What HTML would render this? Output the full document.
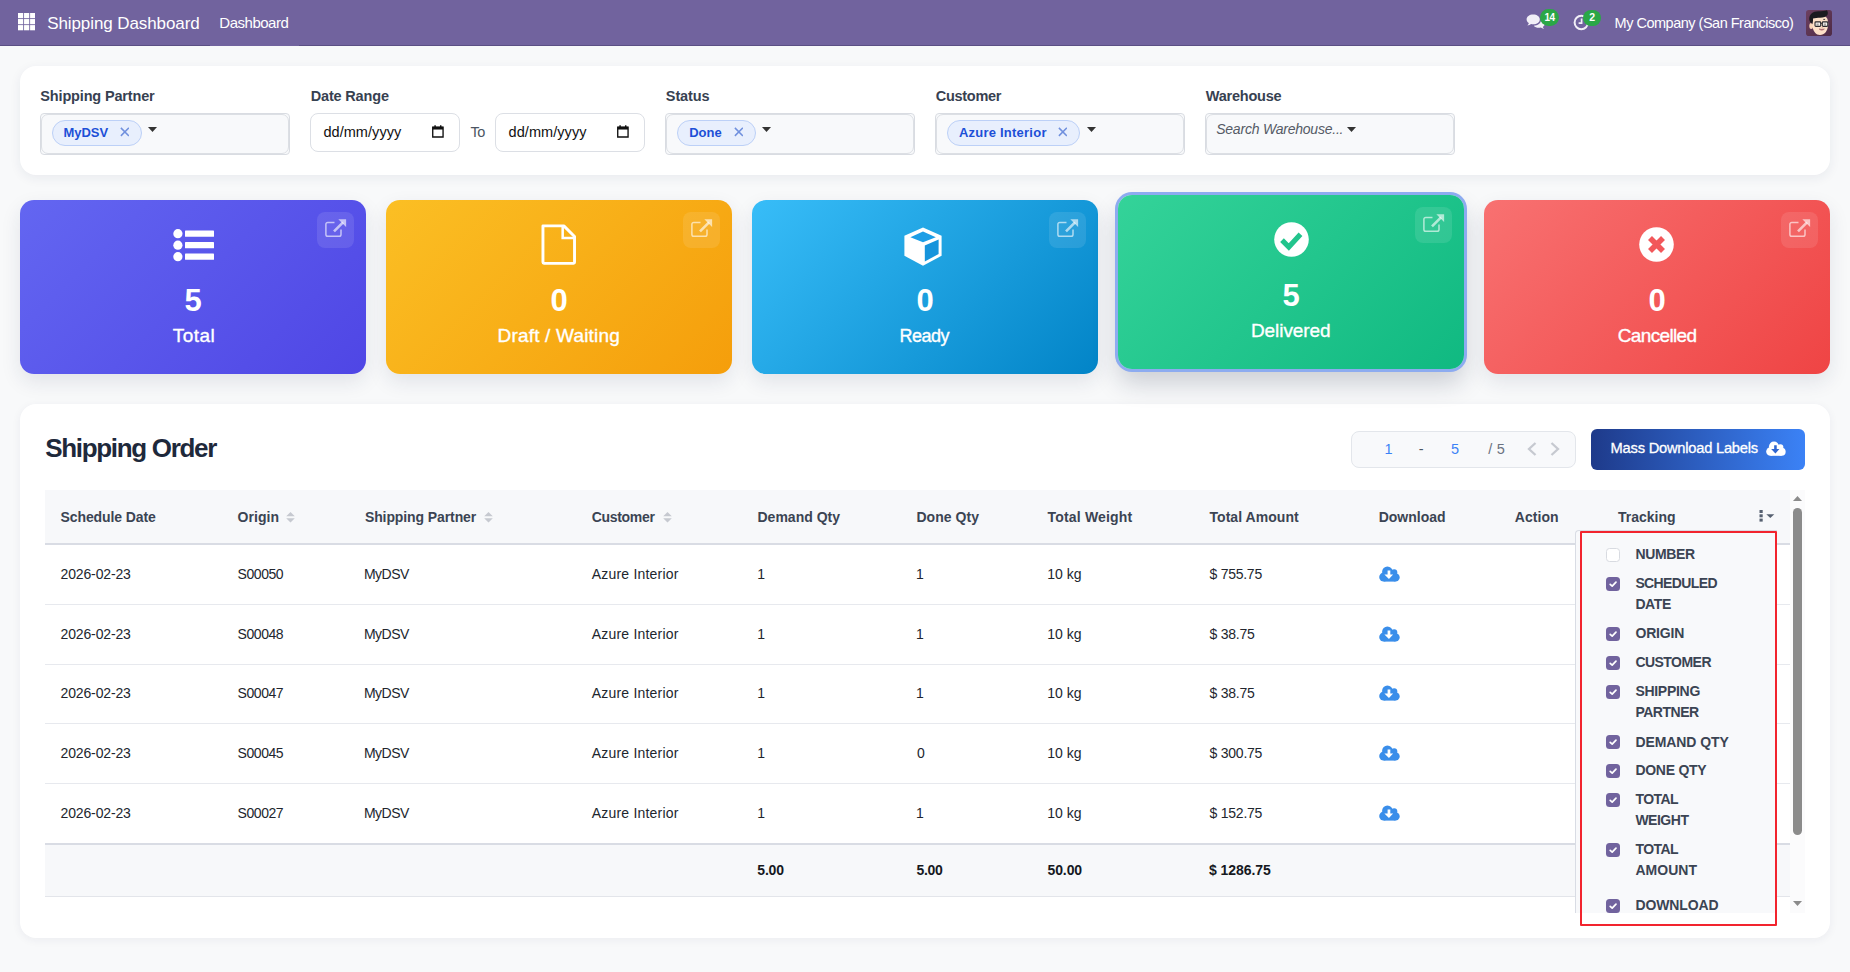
<!DOCTYPE html>
<html>
<head>
<meta charset="utf-8">
<title>Shipping Dashboard</title>
<style>
*{box-sizing:border-box;margin:0;padding:0}
html,body{width:1850px;height:972px;overflow:hidden}
body{background:#f8f9fa;font-family:"Liberation Sans",sans-serif;color:#374151;position:relative;font-size:14px}
.abs{position:absolute}
.t{position:absolute;white-space:nowrap;line-height:1}
svg{display:block}
/* NAVBAR */
#nav{position:absolute;left:0;top:0;width:1850px;height:46px;background:#71639e;border-bottom:1px solid #5b4f84}
#nav .t{color:#fff}
/* FILTER CARD */
#filters{position:absolute;left:20px;top:66px;width:1810px;height:109px;background:#fff;border-radius:16px;box-shadow:0 3px 12px rgba(30,40,80,.07)}
.lbl{position:absolute;white-space:nowrap;line-height:1;font-weight:700;font-size:14px;color:#374151;top:89px}
.sel{position:absolute;top:113px;width:250px;height:42px;border:1px solid #d9dce2;border-radius:4px;background:#f8f9fb}
.sel:before{content:"";position:absolute;left:0;top:0;right:0;bottom:0;border:1px solid #dcdfe4;border-radius:7px}
.tag{position:absolute;top:6px;left:11px;height:26px;border:1px solid #bcd0f7;background:#e8effd;border-radius:14px}
.tag .t{color:#1d4fd7;font-weight:700;font-size:13.5px;top:6px;left:11px}
.date{position:absolute;top:113px;width:150px;height:39px;border:1px solid #dcdfe5;border-radius:8px;background:#fff}
.date .t{left:12px;top:12px;font-size:14px;color:#111}
/* KPI */
.kpi{z-index:1;position:absolute;top:200px;width:346px;height:174px;border-radius:14px;box-shadow:0 8px 20px rgba(30,40,80,.10)}
.kpi .num{position:absolute;left:0;width:100%;text-align:center;top:86px;font-size:30px;font-weight:700;color:#fff;line-height:1}
.kpi .cap{-webkit-text-stroke:.35px #fff;position:absolute;left:0;width:100%;text-align:center;top:126px;font-size:18px;color:#fff;line-height:1}
.kpi .ico{position:absolute;left:50%;top:0}
.kpi .ext{position:absolute;right:12px;top:12px;width:37px;height:36px;border-radius:8px;background:rgba(255,255,255,.10)}

/* TABLE CARD */
#card{position:absolute;left:20px;top:404px;width:1810px;height:534px;background:#fff;border-radius:16px;box-shadow:0 2px 10px rgba(30,40,80,.06)}
#title{left:45px;top:436px;font-size:25px;font-weight:700;color:#1e293b}
#pager{position:absolute;left:1351px;top:431px;width:225px;height:37px;border:1px solid #e3e6eb;border-radius:8px;background:#f8f9fb}
#btn{position:absolute;left:1591px;top:429px;width:214px;height:41px;border-radius:6px;background:linear-gradient(90deg,#1e3a8a,#3b82f6)}
#thead{position:absolute;left:45px;top:490px;width:1745px;height:55px;background:#f7f8fa;border-bottom:2px solid #d9dce4}
.th{position:absolute;white-space:nowrap;line-height:1;font-weight:700;font-size:14.5px;color:#3b4453;top:510px}
.td{position:absolute;white-space:nowrap;line-height:1;font-size:14.5px;color:#22262e}
.rl{position:absolute;left:45px;width:1745px;height:1px;background:#e7e9ee}
#tfoot{position:absolute;left:45px;top:843px;width:1745px;height:54px;background:#f7f8fa;border-top:2px solid #d9dce4;border-bottom:1px solid #e3e5ea}
.tf{position:absolute;white-space:nowrap;line-height:1;font-weight:700;font-size:14px;color:#16191f;top:863px}
/* DROPDOWN */
#dd{position:absolute;left:1575px;top:530px;width:201.500px;height:382.600px;background:#f8f9fb;border-left:1px solid #d9dce4;border-top:1px solid #d9dce4;border-top-left-radius:4px;overflow:hidden}
#red{position:absolute;left:1580px;top:531px;width:197px;height:395px;border:2px solid #f2242e;border-radius:1px}
.ck{position:absolute;left:1606px;width:14px;height:14px;border-radius:3.5px;background:#71639e}
.ck.off{background:#fff;border:1px solid #d8dbe1}
.di{position:absolute;left:1635px;white-space:nowrap;line-height:1;font-weight:700;font-size:14px;color:#3b4453}
/* SCROLLBAR */
#sbt{position:absolute;left:1790px;top:490px;width:15px;height:422.600px;background:#fbfbfc}
#sbh{position:absolute;left:1793px;top:508px;width:9px;height:326.500px;border-radius:4.500px;background:#8b8b8b}
/*FIT*/
#brand{font-size:17px!important;letter-spacing:-0.088px!important;left:47.2px!important;top:14.51px!important}
#menu{font-size:15px!important;letter-spacing:-0.48px!important;left:219.3px!important;top:15.3px!important}
#company{font-size:14.5px!important;letter-spacing:-0.498px!important;left:1614.6px!important;top:15.73px!important}
#b14{font-size:10px!important;letter-spacing:-0.762px!important;left:1544.6px!important;top:12.73px!important}
#b2{font-size:10.5px!important;letter-spacing:0px!important;left:1589.2px!important;top:12.31px!important}
#l1{font-size:14.5px!important;letter-spacing:-0.158px!important;left:40.3px!important;top:88.63px!important}
#l2{font-size:14.5px!important;letter-spacing:-0.167px!important;left:310.7px!important;top:88.63px!important}
#l3{font-size:14.5px!important;letter-spacing:-0.09px!important;left:665.8px!important;top:88.63px!important}
#l4{font-size:14.5px!important;letter-spacing:-0.291px!important;left:935.8px!important;top:88.63px!important}
#l5{font-size:14.5px!important;letter-spacing:-0.219px!important;left:1205.8px!important;top:88.63px!important}
#tg1{font-size:13px!important;letter-spacing:-0.08px!important;left:10.6px!important;top:4.9px!important}
#tg2{font-size:13px!important;letter-spacing:0.01px!important;left:11.2px!important;top:4.9px!important}
#tg3{font-size:13px!important;letter-spacing:0.234px!important;left:10.9px!important;top:4.9px!important}
#d1{font-size:14.5px!important;letter-spacing:0.056px!important;left:12.4px!important;top:10.73px!important}
#d2{font-size:14.5px!important;letter-spacing:0.056px!important;left:12.6px!important;top:10.73px!important}
#to{font-size:14.5px!important;letter-spacing:-0.45px!important;left:470.5px!important;top:124.73px!important}
#wh{font-size:14px!important;letter-spacing:-0.22px!important;left:10.2px!important;top:8.15px!important}
#title{font-size:26px!important;letter-spacing:-1.316px!important;left:45.2px!important;top:435.19px!important}
#pg1{font-size:14.5px!important;letter-spacing:0px!important;left:1384.4px!important;top:441.93px!important}
#pg2{font-size:14.5px!important;letter-spacing:0px!important;left:1418.8px!important;top:441.93px!important}
#pg3{font-size:14.5px!important;letter-spacing:0px!important;left:1450.9px!important;top:441.93px!important}
#pg4{font-size:14.5px!important;letter-spacing:0.271px!important;left:1488.2px!important;top:441.93px!important}
#btnt{font-size:14.7px!important;letter-spacing:-0.227px!important;left:19.6px!important;top:12.06px!important}
#th0{font-size:14px!important;letter-spacing:-0.091px!important;left:60.5px!important;top:510.05px!important}
#th1{font-size:14px!important;letter-spacing:0.026px!important;left:237.6px!important;top:510.05px!important}
#th2{font-size:14px!important;letter-spacing:-0.096px!important;left:364.9px!important;top:510.05px!important}
#th3{font-size:14px!important;letter-spacing:-0.299px!important;left:591.7px!important;top:510.05px!important}
#th4{font-size:14px!important;letter-spacing:0.003px!important;left:757.5px!important;top:510.05px!important}
#th5{font-size:14px!important;letter-spacing:0.066px!important;left:916.4px!important;top:510.05px!important}
#th6{font-size:14px!important;letter-spacing:0.17px!important;left:1047.6px!important;top:510.05px!important}
#th7{font-size:14px!important;letter-spacing:0.045px!important;left:1209.5px!important;top:510.05px!important}
#th8{font-size:14px!important;letter-spacing:0.01px!important;left:1378.7px!important;top:510.05px!important}
#th9{font-size:14px!important;letter-spacing:0.04px!important;left:1514.8px!important;top:510.05px!important}
#th10{font-size:14px!important;letter-spacing:-0.018px!important;left:1618.1px!important;top:510.05px!important}
#tf0{font-size:14px!important;letter-spacing:-0.187px!important;left:757.3px!important;top:863.25px!important}
#tf1{font-size:14px!important;letter-spacing:-0.287px!important;left:916.5px!important;top:863.25px!important}
#tf2{font-size:14px!important;letter-spacing:-0.112px!important;left:1047.5px!important;top:863.25px!important}
#tf3{font-size:14px!important;letter-spacing:-0.087px!important;left:1209.1px!important;top:863.25px!important}
.r0.c0{font-size:14px!important;letter-spacing:-0.136px!important;left:60.5px!important;top:566.95px!important}
.r0.c1{font-size:14px!important;letter-spacing:-0.456px!important;left:237.6px!important;top:566.95px!important}
.r0.c2{font-size:14px!important;letter-spacing:-0.478px!important;left:363.9px!important;top:566.95px!important}
.r0.c3{font-size:14px!important;letter-spacing:0.21px!important;left:591.7px!important;top:566.95px!important}
.r0.c4{font-size:14px!important;letter-spacing:0px!important;left:757.3px!important;top:566.95px!important}
.r0.c5{font-size:14px!important;letter-spacing:0px!important;left:915.9px!important;top:566.95px!important}
.r0.c6{font-size:14px!important;letter-spacing:0.035px!important;left:1047.2px!important;top:566.95px!important}
.r1.c0{font-size:14px!important;letter-spacing:-0.136px!important;left:60.5px!important;top:626.95px!important}
.r1.c1{font-size:14px!important;letter-spacing:-0.456px!important;left:237.6px!important;top:626.95px!important}
.r1.c2{font-size:14px!important;letter-spacing:-0.478px!important;left:363.9px!important;top:626.95px!important}
.r1.c3{font-size:14px!important;letter-spacing:0.21px!important;left:591.7px!important;top:626.95px!important}
.r1.c4{font-size:14px!important;letter-spacing:0px!important;left:757.3px!important;top:626.95px!important}
.r1.c5{font-size:14px!important;letter-spacing:0px!important;left:915.9px!important;top:626.95px!important}
.r1.c6{font-size:14px!important;letter-spacing:0.035px!important;left:1047.2px!important;top:626.95px!important}
.r2.c0{font-size:14px!important;letter-spacing:-0.136px!important;left:60.5px!important;top:686.35px!important}
.r2.c1{font-size:14px!important;letter-spacing:-0.456px!important;left:237.6px!important;top:686.35px!important}
.r2.c2{font-size:14px!important;letter-spacing:-0.478px!important;left:363.9px!important;top:686.35px!important}
.r2.c3{font-size:14px!important;letter-spacing:0.21px!important;left:591.7px!important;top:686.35px!important}
.r2.c4{font-size:14px!important;letter-spacing:0px!important;left:757.3px!important;top:686.35px!important}
.r2.c5{font-size:14px!important;letter-spacing:0px!important;left:915.9px!important;top:686.35px!important}
.r2.c6{font-size:14px!important;letter-spacing:0.035px!important;left:1047.2px!important;top:686.35px!important}
.r3.c0{font-size:14px!important;letter-spacing:-0.136px!important;left:60.5px!important;top:746.25px!important}
.r3.c1{font-size:14px!important;letter-spacing:-0.456px!important;left:237.6px!important;top:746.25px!important}
.r3.c2{font-size:14px!important;letter-spacing:-0.478px!important;left:363.9px!important;top:746.25px!important}
.r3.c3{font-size:14px!important;letter-spacing:0.21px!important;left:591.7px!important;top:746.25px!important}
.r3.c4{font-size:14px!important;letter-spacing:0px!important;left:757.3px!important;top:746.25px!important}
.r3.c5{font-size:14px!important;letter-spacing:0px!important;left:916.9px!important;top:746.25px!important}
.r3.c6{font-size:14px!important;letter-spacing:0.035px!important;left:1047.2px!important;top:746.25px!important}
.r4.c0{font-size:14px!important;letter-spacing:-0.136px!important;left:60.5px!important;top:806.05px!important}
.r4.c1{font-size:14px!important;letter-spacing:-0.456px!important;left:237.6px!important;top:806.05px!important}
.r4.c2{font-size:14px!important;letter-spacing:-0.478px!important;left:363.9px!important;top:806.05px!important}
.r4.c3{font-size:14px!important;letter-spacing:0.21px!important;left:591.7px!important;top:806.05px!important}
.r4.c4{font-size:14px!important;letter-spacing:0px!important;left:757.3px!important;top:806.05px!important}
.r4.c5{font-size:14px!important;letter-spacing:0px!important;left:915.9px!important;top:806.05px!important}
.r4.c6{font-size:14px!important;letter-spacing:0.035px!important;left:1047.2px!important;top:806.05px!important}
.r0.c7{font-size:14px!important;letter-spacing:-0.259px!important;left:1209.5px!important;top:566.95px!important}
.r1.c7{font-size:14px!important;letter-spacing:-0.237px!important;left:1209.5px!important;top:626.95px!important}
.r2.c7{font-size:14px!important;letter-spacing:-0.237px!important;left:1209.5px!important;top:686.35px!important}
.r3.c7{font-size:14px!important;letter-spacing:-0.23px!important;left:1209.5px!important;top:746.25px!important}
.r4.c7{font-size:14px!important;letter-spacing:-0.23px!important;left:1209.5px!important;top:806.05px!important}
#di0{font-size:14px!important;letter-spacing:-0.326px!important;left:1635.4px!important;top:546.85px!important}
#di1{font-size:14px!important;letter-spacing:-0.626px!important;left:1635.4px!important;top:576.05px!important}
#di2{font-size:14px!important;letter-spacing:-0.411px!important;left:1635.4px!important;top:596.95px!important}
#di3{font-size:14px!important;letter-spacing:-0.154px!important;left:1635.4px!important;top:626.05px!important}
#di4{font-size:14px!important;letter-spacing:-0.535px!important;left:1635.4px!important;top:654.85px!important}
#di5{font-size:14px!important;letter-spacing:-0.288px!important;left:1635.4px!important;top:684.45px!important}
#di6{font-size:14px!important;letter-spacing:-0.487px!important;left:1635.4px!important;top:705.05px!important}
#di7{font-size:14px!important;letter-spacing:-0.075px!important;left:1635.4px!important;top:734.65px!important}
#di8{font-size:14px!important;letter-spacing:-0.268px!important;left:1635.4px!important;top:763.15px!important}
#di9{font-size:14px!important;letter-spacing:-0.528px!important;left:1635.4px!important;top:792.45px!important}
#di10{font-size:14px!important;letter-spacing:-0.488px!important;left:1635.4px!important;top:813.15px!important}
#di11{font-size:14px!important;letter-spacing:-0.528px!important;left:1635.4px!important;top:842.35px!important}
#di12{font-size:14px!important;letter-spacing:0.043px!important;left:1635.4px!important;top:863.25px!important}
#di13{font-size:14px!important;letter-spacing:-0.111px!important;left:1635.4px!important;top:898.25px!important}
#cap0{font-size:19px!important;letter-spacing:0.447px!important;left:152.8px!important;top:125.92px!important;width:auto!important;text-align:left!important}
#cap1{font-size:19px!important;letter-spacing:0.186px!important;left:111.5px!important;top:125.92px!important;width:auto!important;text-align:left!important}
#cap2{font-size:18px!important;letter-spacing:-0.483px!important;left:147.4px!important;top:126.76px!important;width:auto!important;text-align:left!important}
#cap3{font-size:19px!important;letter-spacing:-0.061px!important;left:132.9px!important;top:125.92px!important;width:auto!important;text-align:left!important}
#cap4{font-size:19px!important;letter-spacing:-0.654px!important;left:133.8px!important;top:125.92px!important;width:auto!important;text-align:left!important}
#num0{font-size:31px!important;top:84.76px!important}
#num1{font-size:31px!important;top:84.76px!important}
#num2{font-size:31px!important;top:84.76px!important}
#num3{font-size:31px!important;top:84.96px!important}
#num4{font-size:31px!important;top:84.76px!important}
/*ENDFIT*/
#btnt{-webkit-text-stroke:.3px #fff}
</style>
</head>
<body>

<!-- ================= NAVBAR ================= -->
<div id="nav">
  <svg class="abs" style="left:17.900px;top:13.400px" width="17.300" height="17.300" viewBox="0 0 17.300 17.300"><g fill="#fff"><rect x="0.00" y="0.00" width="5.200" height="5.200"/><rect x="6.05" y="0.00" width="5.200" height="5.200"/><rect x="12.10" y="0.00" width="5.200" height="5.200"/><rect x="0.00" y="6.05" width="5.200" height="5.200"/><rect x="6.05" y="6.05" width="5.200" height="5.200"/><rect x="12.10" y="6.05" width="5.200" height="5.200"/><rect x="0.00" y="12.10" width="5.200" height="5.200"/><rect x="6.05" y="12.10" width="5.200" height="5.200"/><rect x="12.10" y="12.10" width="5.200" height="5.200"/></g></svg>
  <div class="t" id="brand" style="left:47px;top:14px;font-size:17px">Shipping Dashboard</div>
  <div class="t" id="menu" style="left:220px;top:15px;font-size:14px">Dashboard</div>
  <div class="abs" style="left:210px;top:45px;width:89px;height:1px;background:#71639e"></div>

  <svg class="abs" style="left:1526px;top:14px" width="20" height="17" viewBox="0 0 20 17"><g fill="#f1eff7"><path d="M7.2 0.6C3.4 0.6 0.6 2.7 0.6 5.4c0 1.5 0.9 2.8 2.3 3.7-0.2 0.9-0.8 1.7-1.5 2.3 1.4-0.1 2.7-0.6 3.7-1.4 0.7 0.2 1.4 0.2 2.1 0.2 3.8 0 6.6-2.1 6.6-4.8S11 0.6 7.2 0.6z"/><path d="M15 6.2c0 3-3.2 5.3-7.2 5.5 1 1.3 2.9 2.1 5 2.1 0.6 0 1.300-0.100 1.900-0.200 0.900 0.700 2.100 1.200 3.400 1.300-0.600-0.500-1.100-1.200-1.300-2 1.200-0.800 2-1.900 2-3.200 0-1.600-1.500-3-3.800-3.500z"/></g></svg>
  <div class="abs" style="left:1539.500px;top:9px;width:19.900px;height:17.200px;border-radius:8.600px;background:#2aa747"></div>
  <div class="t" id="b14" style="left:1544.5px;top:12.5px;font-size:10.5px;font-weight:700">14</div>
  <svg class="abs" style="left:1573px;top:14px" width="17" height="17" viewBox="0 0 17 17"><circle cx="8.3" cy="8.5" r="6.7" fill="none" stroke="#f1eff7" stroke-width="2"/><path d="M8.6 4.6v4.6H5.6" fill="none" stroke="#f1eff7" stroke-width="1.7"/></svg>
  <div class="abs" style="left:1583px;top:9.900px;width:18.300px;height:16.300px;border-radius:8.150px;background:#2aa747"></div>
  <div class="t" id="b2" style="left:1589px;top:13px;font-size:10.5px;font-weight:700">2</div>
  <svg class="abs" style="left:1806px;top:10px" width="26" height="26" viewBox="0 0 26 26"><defs><clipPath id="avc"><rect width="26" height="26" rx="2.800"/></clipPath><linearGradient id="avg" x1="0" y1="0" x2="1" y2="1"><stop offset="0" stop-color="#6d4060"/><stop offset="1" stop-color="#4e2b46"/></linearGradient></defs><g clip-path="url(#avc)"><rect width="26" height="26" fill="url(#avg)"/><ellipse cx="5.200" cy="16" rx="1.900" ry="3" fill="#f7d3b8"/><path d="M6.300 10c0-3 3-4.500 8-4.500s7.700 2 7.700 6.500c0.300 1 0.500 2.500 0 4-0.500 5-3.500 9-8 9-4 0-6.500-3.500-7.500-8z" fill="#fde0c8"/><path d="M3.300 9.500C2.800 4.500 7 1.200 12.500 1.300c3.500 0 6-0.300 8.500-1 0.800 1.300 1.200 3 0.500 4.500-1 2-4 3-7.500 3-2.500 0-5 0.300-7 0.700 0.200 2.500-0.300 4.500-0.700 5.500-1.200-0.800-2.800-2.500-3-4.500z" fill="#1c1b20"/><rect x="9" y="11.900" width="5.700" height="4.500" rx="0.900" fill="#f4f1ee" stroke="#2b2a2e" stroke-width="1.100"/><rect x="16.300" y="11.900" width="5.500" height="4.500" rx="0.900" fill="#f4f1ee" stroke="#2b2a2e" stroke-width="1.100"/><path d="M14.700 13.300h1.600" stroke="#2b2a2e" stroke-width="1"/><path d="M10.500 13.500h2.200v2.200h-2.200zM17.800 13.500h2.200v2.200h-2.200z" fill="#8a8682" opacity=".7"/><path d="M17.300 9.400h1.800" stroke="#2b2a2e" stroke-width="0.900"/><path d="M13.100 19c1.700 1.500 3.800 1.500 5.300 0-1.700 0.400-3.600 0.400-5.300 0z" fill="#b9727a" stroke="#a05c66" stroke-width="0.600"/><path d="M15.500 17.300h1.300" stroke="#e7a58f" stroke-width="0.900"/></g></svg>
  <div class="t" id="company" style="left:1615px;top:15px;font-size:14px">My Company (San Francisco)</div>
</div>

<!-- ================= FILTERS ================= -->
<div id="filters"></div>
<div class="lbl" id="l1" style="left:40px">Shipping Partner</div>
<div class="lbl" id="l2" style="left:310px">Date Range</div>
<div class="lbl" id="l3" style="left:665px">Status</div>
<div class="lbl" id="l4" style="left:935px">Customer</div>
<div class="lbl" id="l5" style="left:1205px">Warehouse</div>

<div class="sel" style="left:40px"><div class="tag" style="width:90px"><div class="t" id="tg1">MyDSV</div><svg class="abs" style="left:66.5px;top:6.3px" width="9.8" height="9.8" viewBox="0 0 11 11"><path d="M1 1L10 10M10 1L1 10" stroke="#7090de" stroke-width="1.700" fill="none"/></svg></div><svg class="abs" style="left:107px;top:12.700px" width="9" height="5" viewBox="0 0 9 5"><path d="M0 0h9L4.500 5z" fill="#333"/></svg></div>
<div class="date" style="left:310px"><div class="t dt" id="d1">dd/mm/yyyy</div><svg class="abs" style="left:121.200px;top:11.200px" width="11.800" height="12.700" viewBox="0 0 13 14"><path d="M0.800 2.300h11.400v10.900H0.800z" fill="none" stroke="#111" stroke-width="1.500"/><rect x="0.800" y="2" width="11.400" height="3" fill="#111"/><rect x="2.600" y="0.300" width="1.600" height="2.500" fill="#111"/><rect x="8.800" y="0.300" width="1.600" height="2.500" fill="#111"/></svg></div>
<div class="t" id="to" style="left:470px;top:125px;font-size:14px;color:#4b5563">To</div>
<div class="date" style="left:495px"><div class="t dt" id="d2">dd/mm/yyyy</div><svg class="abs" style="left:121.200px;top:11.200px" width="11.800" height="12.700" viewBox="0 0 13 14"><path d="M0.800 2.300h11.400v10.900H0.800z" fill="none" stroke="#111" stroke-width="1.500"/><rect x="0.800" y="2" width="11.400" height="3" fill="#111"/><rect x="2.600" y="0.300" width="1.600" height="2.500" fill="#111"/><rect x="8.800" y="0.300" width="1.600" height="2.500" fill="#111"/></svg></div>
<div class="sel" style="left:665px"><div class="tag" style="width:79px"><div class="t" id="tg2">Done</div><svg class="abs" style="left:55.5px;top:6.3px" width="9.8" height="9.8" viewBox="0 0 11 11"><path d="M1 1L10 10M10 1L1 10" stroke="#7090de" stroke-width="1.700" fill="none"/></svg></div><svg class="abs" style="left:96px;top:12.700px" width="9" height="5" viewBox="0 0 9 5"><path d="M0 0h9L4.500 5z" fill="#333"/></svg></div>
<div class="sel" style="left:935px"><div class="tag" style="width:133px"><div class="t" id="tg3">Azure Interior</div><svg class="abs" style="left:109.5px;top:6.3px" width="9.8" height="9.8" viewBox="0 0 11 11"><path d="M1 1L10 10M10 1L1 10" stroke="#7090de" stroke-width="1.700" fill="none"/></svg></div><svg class="abs" style="left:150.5px;top:12.700px" width="9" height="5" viewBox="0 0 9 5"><path d="M0 0h9L4.500 5z" fill="#333"/></svg></div>
<div class="sel" style="left:1205px"><div class="t" id="wh" style="left:10px;top:8px;font-style:italic;font-size:14px;color:#555b66">Search Warehouse...</div><svg class="abs" style="left:141px;top:12.700px" width="9" height="5" viewBox="0 0 9 5"><path d="M0 0h9L4.500 5z" fill="#333"/></svg></div>

<!-- ================= KPI CARDS ================= -->
<div class="kpi" style="left:20px;background:linear-gradient(135deg,#6366f1,#4f46e5)"><div class="ext"><svg width="37" height="36" viewBox="0 0 37 36"><path d="M17.500 10.400H10.700a1.800 1.800 0 0 0-1.800 1.800v10.300a1.800 1.800 0 0 0 1.800 1.800h11.500a1.800 1.800 0 0 0 1.800-1.800V17.500" fill="none" stroke="#fff" stroke-opacity=".62" stroke-width="1.500"/><path d="M17 19.400L26 10.400" stroke="#fff" stroke-opacity=".62" stroke-width="2.600" fill="none"/><path d="M21.300 7.300h7.800v7.800z" fill="#fff" fill-opacity=".62"/></svg></div><div class="num" id="num0">5</div><div class="cap" id="cap0">Total</div><svg class="abs" style="left:152.500px;top:28.500px" width="42" height="33" viewBox="0 0 42 33"><g fill="#fff"><circle cx="4.900" cy="4.700" r="4.600"/><circle cx="4.900" cy="16.200" r="4.600"/><circle cx="4.900" cy="27.700" r="4.600"/><rect x="12" y="1.600" width="29" height="6.200" rx="0.600"/><rect x="12" y="13.100" width="29" height="6.200" rx="0.600"/><rect x="12" y="24.600" width="29" height="6.200" rx="0.600"/></g></svg></div>
<div class="kpi" style="left:386px;background:linear-gradient(135deg,#fbbf24,#f59e0b)"><div class="ext"><svg width="37" height="36" viewBox="0 0 37 36"><path d="M17.500 10.400H10.700a1.800 1.800 0 0 0-1.800 1.800v10.300a1.800 1.800 0 0 0 1.800 1.800h11.500a1.800 1.800 0 0 0 1.800-1.800V17.500" fill="none" stroke="#fff" stroke-opacity=".62" stroke-width="1.500"/><path d="M17 19.400L26 10.400" stroke="#fff" stroke-opacity=".62" stroke-width="2.600" fill="none"/><path d="M21.300 7.300h7.800v7.800z" fill="#fff" fill-opacity=".62"/></svg></div><div class="num" id="num1">0</div><div class="cap" id="cap1">Draft / Waiting</div><svg class="abs" style="left:155.300px;top:24px" width="35" height="40.800" viewBox="0 0 36 42"><path d="M2 1.900h21.500l11 11v26.600a1 1 0 0 1-1 1H3a1 1 0 0 1-1-1z" fill="none" stroke="#fff" stroke-width="3" stroke-linejoin="round"/><path d="M22.300 2v12.300h12.300" fill="none" stroke="#fff" stroke-width="2.600"/></svg></div>
<div class="kpi" style="left:752px;background:linear-gradient(135deg,#38bdf8,#0284c7)"><div class="ext"><svg width="37" height="36" viewBox="0 0 37 36"><path d="M17.500 10.400H10.700a1.800 1.800 0 0 0-1.800 1.800v10.300a1.800 1.800 0 0 0 1.800 1.800h11.500a1.800 1.800 0 0 0 1.800-1.800V17.500" fill="none" stroke="#fff" stroke-opacity=".62" stroke-width="1.500"/><path d="M17 19.400L26 10.400" stroke="#fff" stroke-opacity=".62" stroke-width="2.600" fill="none"/><path d="M21.300 7.300h7.800v7.800z" fill="#fff" fill-opacity=".62"/></svg></div><div class="num" id="num2">0</div><div class="cap" id="cap2">Ready</div><svg class="abs" style="left:151.300px;top:26.500px" width="40" height="40" viewBox="0 0 40 40"><path d="M20 0.500L38.600 8.700V28.800L20 38.800L1.400 28.800V8.700z" fill="#fff"/><path d="M20 4.600L32.800 10.200L20 15.300L7.400 10.200z" fill="#1c9ee6"/><path d="M21.800 18.400L35.600 12.600V27L21.800 34.500z" fill="#1694dc"/></svg></div>
<div class="kpi" style="left:1118px;top:195px;background:linear-gradient(135deg,#34d399,#10b981);box-shadow:0 0 0 3px #8dabf0,0 14px 26px rgba(20,30,60,.20)"><div class="ext"><svg width="37" height="36" viewBox="0 0 37 36"><path d="M17.500 10.400H10.700a1.800 1.800 0 0 0-1.800 1.800v10.300a1.800 1.800 0 0 0 1.800 1.800h11.500a1.800 1.800 0 0 0 1.800-1.800V17.500" fill="none" stroke="#fff" stroke-opacity=".62" stroke-width="1.500"/><path d="M17 19.400L26 10.400" stroke="#fff" stroke-opacity=".62" stroke-width="2.600" fill="none"/><path d="M21.300 7.300h7.800v7.800z" fill="#fff" fill-opacity=".62"/></svg></div><div class="num" id="num3">5</div><div class="cap" id="cap3">Delivered</div><svg class="abs" style="left:155.500px;top:27px" width="35" height="35" viewBox="0 0 35 35"><circle cx="17.500" cy="17.500" r="17.300" fill="#fff"/><path d="M8 18.200L14.800 25L26.500 12.200" fill="none" stroke="#22c48c" stroke-width="5.200"/></svg></div>
<div class="kpi" style="left:1484px;background:linear-gradient(135deg,#f87171,#ef4444)"><div class="ext"><svg width="37" height="36" viewBox="0 0 37 36"><path d="M17.500 10.400H10.700a1.800 1.800 0 0 0-1.800 1.800v10.300a1.800 1.800 0 0 0 1.800 1.800h11.500a1.800 1.800 0 0 0 1.800-1.800V17.500" fill="none" stroke="#fff" stroke-opacity=".62" stroke-width="1.500"/><path d="M17 19.400L26 10.400" stroke="#fff" stroke-opacity=".62" stroke-width="2.600" fill="none"/><path d="M21.300 7.300h7.800v7.800z" fill="#fff" fill-opacity=".62"/></svg></div><div class="num" id="num4">0</div><div class="cap" id="cap4">Cancelled</div><svg class="abs" style="left:155.300px;top:27.200px" width="35" height="35" viewBox="0 0 35 35"><circle cx="17.500" cy="17.500" r="17.300" fill="#fff"/><path d="M11 11L24 24M24 11L11 24" fill="none" stroke="#f2575a" stroke-width="5.600"/></svg></div>

<!-- ================= TABLE CARD ================= -->
<div id="card"></div>
<div class="t" id="title">Shipping Order</div>
<div id="pager"></div>
<div class="t pg" id="pg1" style="left:1385px;top:442px;font-size:14.5px;color:#3b82f6">1</div>
<div class="t pg" id="pg2" style="left:1418.5px;top:442px;font-size:14.5px;color:#4b5563">-</div>
<div class="t pg" id="pg3" style="left:1450.5px;top:442px;font-size:14.5px;color:#3b82f6">5</div>
<div class="t pg" id="pg4" style="left:1488px;top:442px;font-size:14.5px;color:#6b7280">/ 5</div>
<div id="btn"><div class="t" id="btnt" style="left:20.5px;top:13px;font-size:14.5px;color:#fff">Mass Download Labels</div></div>
<div id="thead"></div>
<div class="th" id="th0" style="left:60px">Schedule Date</div>
<div class="th" id="th1" style="left:237.3px">Origin</div>
<div class="th" id="th2" style="left:364.8px">Shipping Partner</div>
<div class="th" id="th3" style="left:591.5px">Customer</div>
<div class="th" id="th4" style="left:757.5px">Demand Qty</div>
<div class="th" id="th5" style="left:916.3px">Done Qty</div>
<div class="th" id="th6" style="left:1047.6px">Total Weight</div>
<div class="th" id="th7" style="left:1209.4px">Total Amount</div>
<div class="th" id="th8" style="left:1378.7px">Download</div>
<div class="th" id="th9" style="left:1514.8px">Action</div>
<div class="th" id="th10" style="left:1618px">Tracking</div>
<div class="td r0 c0" style="left:60px;top:567px">2026-02-23</div>
<div class="td r0 c1" style="left:237.3px;top:567px">S00050</div>
<div class="td r0 c2" style="left:364.8px;top:567px">MyDSV</div>
<div class="td r0 c3" style="left:591.5px;top:567px">Azure Interior</div>
<div class="td r0 c4" style="left:757.8px;top:567px">1</div>
<div class="td r0 c5" style="left:916.8px;top:567px">1</div>
<div class="td r0 c6" style="left:1048px;top:567px">10 kg</div>
<div class="td r0 c7" style="left:1209.4px;top:567px">$ 755.75</div>
<div class="td r1 c0" style="left:60px;top:627px">2026-02-23</div>
<div class="td r1 c1" style="left:237.3px;top:627px">S00048</div>
<div class="td r1 c2" style="left:364.8px;top:627px">MyDSV</div>
<div class="td r1 c3" style="left:591.5px;top:627px">Azure Interior</div>
<div class="td r1 c4" style="left:757.8px;top:627px">1</div>
<div class="td r1 c5" style="left:916.8px;top:627px">1</div>
<div class="td r1 c6" style="left:1048px;top:627px">10 kg</div>
<div class="td r1 c7" style="left:1209.4px;top:627px">$ 38.75</div>
<div class="td r2 c0" style="left:60px;top:686px">2026-02-23</div>
<div class="td r2 c1" style="left:237.3px;top:686px">S00047</div>
<div class="td r2 c2" style="left:364.8px;top:686px">MyDSV</div>
<div class="td r2 c3" style="left:591.5px;top:686px">Azure Interior</div>
<div class="td r2 c4" style="left:757.8px;top:686px">1</div>
<div class="td r2 c5" style="left:916.8px;top:686px">1</div>
<div class="td r2 c6" style="left:1048px;top:686px">10 kg</div>
<div class="td r2 c7" style="left:1209.4px;top:686px">$ 38.75</div>
<div class="td r3 c0" style="left:60px;top:746px">2026-02-23</div>
<div class="td r3 c1" style="left:237.3px;top:746px">S00045</div>
<div class="td r3 c2" style="left:364.8px;top:746px">MyDSV</div>
<div class="td r3 c3" style="left:591.5px;top:746px">Azure Interior</div>
<div class="td r3 c4" style="left:757.8px;top:746px">1</div>
<div class="td r3 c5" style="left:916.8px;top:746px">0</div>
<div class="td r3 c6" style="left:1048px;top:746px">10 kg</div>
<div class="td r3 c7" style="left:1209.4px;top:746px">$ 300.75</div>
<div class="td r4 c0" style="left:60px;top:806px">2026-02-23</div>
<div class="td r4 c1" style="left:237.3px;top:806px">S00027</div>
<div class="td r4 c2" style="left:364.8px;top:806px">MyDSV</div>
<div class="td r4 c3" style="left:591.5px;top:806px">Azure Interior</div>
<div class="td r4 c4" style="left:757.8px;top:806px">1</div>
<div class="td r4 c5" style="left:916.8px;top:806px">1</div>
<div class="td r4 c6" style="left:1048px;top:806px">10 kg</div>
<div class="td r4 c7" style="left:1209.4px;top:806px">$ 152.75</div>
<div class="rl" style="top:604px"></div>
<div class="rl" style="top:664px"></div>
<div class="rl" style="top:723px"></div>
<div class="rl" style="top:783px"></div>
<div id="tfoot"></div>
<div class="tf" id="tf0" style="left:757px">5.00</div>
<div class="tf" id="tf1" style="left:916px">5.00</div>
<div class="tf" id="tf2" style="left:1047.5px">50.00</div>
<div class="tf" id="tf3" style="left:1209px">$ 1286.75</div>
<div id="sbt"></div><div id="sbh"></div>
<svg class="abs" style="left:285.8px;top:512px" width="9" height="11" viewBox="0 0 9 11"><path d="M0.200 4.300L4.500 0L8.800 4.300zM0.200 6.300h8.600L4.500 10.600z" fill="#c6c9d0"/></svg><svg class="abs" style="left:484.3px;top:512px" width="9" height="11" viewBox="0 0 9 11"><path d="M0.200 4.300L4.500 0L8.800 4.300zM0.200 6.300h8.600L4.500 10.600z" fill="#c6c9d0"/></svg><svg class="abs" style="left:662.8px;top:512px" width="9" height="11" viewBox="0 0 9 11"><path d="M0.200 4.300L4.500 0L8.800 4.300zM0.200 6.300h8.600L4.500 10.600z" fill="#c6c9d0"/></svg><svg class="abs" style="left:1758.500px;top:510px" width="16" height="12" viewBox="0 0 16 12"><g fill="#566070"><rect x="0.500" y="0" width="3.200" height="3"/><rect x="0.500" y="4.300" width="3.200" height="3"/><rect x="0.500" y="8.600" width="3.200" height="3"/><path d="M7.300 4.200h8L11.300 8z"/></g></svg><svg class="abs" style="left:1379px;top:565.6px" width="21.00" height="16.00" viewBox="0 0 21 16"><g fill="#3a8eea"><circle cx="4.700" cy="11.100" r="4.500"/><circle cx="16.500" cy="11.400" r="4.200"/><circle cx="8.400" cy="5.800" r="5.300"/><circle cx="15.200" cy="6.400" r="3.100"/><rect x="4.700" y="6.500" width="11.800" height="9.100"/></g><path d="M8.600 4.400h2.700v4.100h2.800L9.950 13.100 5.400 8.500h3.200z" fill="#fff"/></svg><svg class="abs" style="left:1379px;top:625.6px" width="21.00" height="16.00" viewBox="0 0 21 16"><g fill="#3a8eea"><circle cx="4.700" cy="11.100" r="4.500"/><circle cx="16.500" cy="11.400" r="4.200"/><circle cx="8.400" cy="5.800" r="5.300"/><circle cx="15.200" cy="6.400" r="3.100"/><rect x="4.700" y="6.500" width="11.800" height="9.100"/></g><path d="M8.600 4.400h2.700v4.100h2.800L9.950 13.100 5.400 8.500h3.200z" fill="#fff"/></svg><svg class="abs" style="left:1379px;top:684.6px" width="21.00" height="16.00" viewBox="0 0 21 16"><g fill="#3a8eea"><circle cx="4.700" cy="11.100" r="4.500"/><circle cx="16.500" cy="11.400" r="4.200"/><circle cx="8.400" cy="5.800" r="5.300"/><circle cx="15.200" cy="6.400" r="3.100"/><rect x="4.700" y="6.500" width="11.800" height="9.100"/></g><path d="M8.600 4.400h2.700v4.100h2.800L9.950 13.100 5.400 8.500h3.200z" fill="#fff"/></svg><svg class="abs" style="left:1379px;top:744.6px" width="21.00" height="16.00" viewBox="0 0 21 16"><g fill="#3a8eea"><circle cx="4.700" cy="11.100" r="4.500"/><circle cx="16.500" cy="11.400" r="4.200"/><circle cx="8.400" cy="5.800" r="5.300"/><circle cx="15.200" cy="6.400" r="3.100"/><rect x="4.700" y="6.500" width="11.800" height="9.100"/></g><path d="M8.600 4.400h2.700v4.100h2.800L9.950 13.100 5.400 8.500h3.200z" fill="#fff"/></svg><svg class="abs" style="left:1379px;top:804.6px" width="21.00" height="16.00" viewBox="0 0 21 16"><g fill="#3a8eea"><circle cx="4.700" cy="11.100" r="4.500"/><circle cx="16.500" cy="11.400" r="4.200"/><circle cx="8.400" cy="5.800" r="5.300"/><circle cx="15.200" cy="6.400" r="3.100"/><rect x="4.700" y="6.500" width="11.800" height="9.100"/></g><path d="M8.600 4.400h2.700v4.100h2.800L9.950 13.100 5.400 8.500h3.200z" fill="#fff"/></svg><svg class="abs" style="left:1765.8px;top:440.5px" width="19.95" height="15.20" viewBox="0 0 21 16"><g fill="#fff"><circle cx="4.700" cy="11.100" r="4.500"/><circle cx="16.500" cy="11.400" r="4.200"/><circle cx="8.400" cy="5.800" r="5.300"/><circle cx="15.200" cy="6.400" r="3.100"/><rect x="4.700" y="6.500" width="11.800" height="9.100"/></g><path d="M8.600 4.400h2.700v4.100h2.800L9.950 13.100 5.400 8.500h3.200z" fill="#2f66d0"/></svg><svg class="abs" style="left:1527px;top:442px" width="10" height="14" viewBox="0 0 10 14"><path d="M8.500 1L2 7l6.500 6" fill="none" stroke="#c6c9d0" stroke-width="2.300"/></svg><svg class="abs" style="left:1550px;top:442px" width="10" height="14" viewBox="0 0 10 14"><path d="M1.500 1L8 7l-6.500 6" fill="none" stroke="#c6c9d0" stroke-width="2.300"/></svg><svg class="abs" style="left:1793px;top:496px" width="9" height="5" viewBox="0 0 9 5"><path d="M0 5h9L4.500 0z" fill="#8b8b8b"/></svg><svg class="abs" style="left:1793px;top:901px" width="9" height="5" viewBox="0 0 9 5"><path d="M0 0h9L4.500 5z" fill="#8b8b8b"/></svg>
<div id="dd"></div>
<div class="di" id="di0" style="top:548px">NUMBER</div>
<div class="ck off" style="top:548px"></div>
<div class="di" id="di1" style="top:577px">SCHEDULED</div>
<div class="ck" style="top:577px"><svg width="14" height="14" viewBox="0 0 14 14"><path d="M4.200 7.300 L6.200 9.200 L10 5.100" fill="none" stroke="#fff" stroke-width="1.700" stroke-linecap="round" stroke-linejoin="round"/></svg></div>
<div class="di" id="di2" style="top:598px">DATE</div>
<div class="di" id="di3" style="top:627px">ORIGIN</div>
<div class="ck" style="top:627px"><svg width="14" height="14" viewBox="0 0 14 14"><path d="M4.200 7.300 L6.200 9.200 L10 5.100" fill="none" stroke="#fff" stroke-width="1.700" stroke-linecap="round" stroke-linejoin="round"/></svg></div>
<div class="di" id="di4" style="top:656px">CUSTOMER</div>
<div class="ck" style="top:656px"><svg width="14" height="14" viewBox="0 0 14 14"><path d="M4.200 7.300 L6.200 9.200 L10 5.100" fill="none" stroke="#fff" stroke-width="1.700" stroke-linecap="round" stroke-linejoin="round"/></svg></div>
<div class="di" id="di5" style="top:685px">SHIPPING</div>
<div class="ck" style="top:685px"><svg width="14" height="14" viewBox="0 0 14 14"><path d="M4.200 7.300 L6.200 9.200 L10 5.100" fill="none" stroke="#fff" stroke-width="1.700" stroke-linecap="round" stroke-linejoin="round"/></svg></div>
<div class="di" id="di6" style="top:706px">PARTNER</div>
<div class="di" id="di7" style="top:735px">DEMAND QTY</div>
<div class="ck" style="top:735px"><svg width="14" height="14" viewBox="0 0 14 14"><path d="M4.200 7.300 L6.200 9.200 L10 5.100" fill="none" stroke="#fff" stroke-width="1.700" stroke-linecap="round" stroke-linejoin="round"/></svg></div>
<div class="di" id="di8" style="top:764px">DONE QTY</div>
<div class="ck" style="top:764px"><svg width="14" height="14" viewBox="0 0 14 14"><path d="M4.200 7.300 L6.200 9.200 L10 5.100" fill="none" stroke="#fff" stroke-width="1.700" stroke-linecap="round" stroke-linejoin="round"/></svg></div>
<div class="di" id="di9" style="top:793px">TOTAL</div>
<div class="ck" style="top:793px"><svg width="14" height="14" viewBox="0 0 14 14"><path d="M4.200 7.300 L6.200 9.200 L10 5.100" fill="none" stroke="#fff" stroke-width="1.700" stroke-linecap="round" stroke-linejoin="round"/></svg></div>
<div class="di" id="di10" style="top:814px">WEIGHT</div>
<div class="di" id="di11" style="top:843px">TOTAL</div>
<div class="ck" style="top:843px"><svg width="14" height="14" viewBox="0 0 14 14"><path d="M4.200 7.300 L6.200 9.200 L10 5.100" fill="none" stroke="#fff" stroke-width="1.700" stroke-linecap="round" stroke-linejoin="round"/></svg></div>
<div class="di" id="di12" style="top:864px">AMOUNT</div>
<div class="di" id="di13" style="top:899px">DOWNLOAD</div>
<div class="ck" style="top:899px"><svg width="14" height="14" viewBox="0 0 14 14"><path d="M4.200 7.300 L6.200 9.200 L10 5.100" fill="none" stroke="#fff" stroke-width="1.700" stroke-linecap="round" stroke-linejoin="round"/></svg></div>
<div class="abs" style="left:1576px;top:912.600px;width:202px;height:14px;background:#fff"></div>
<div id="red"></div>

</body>
</html>
